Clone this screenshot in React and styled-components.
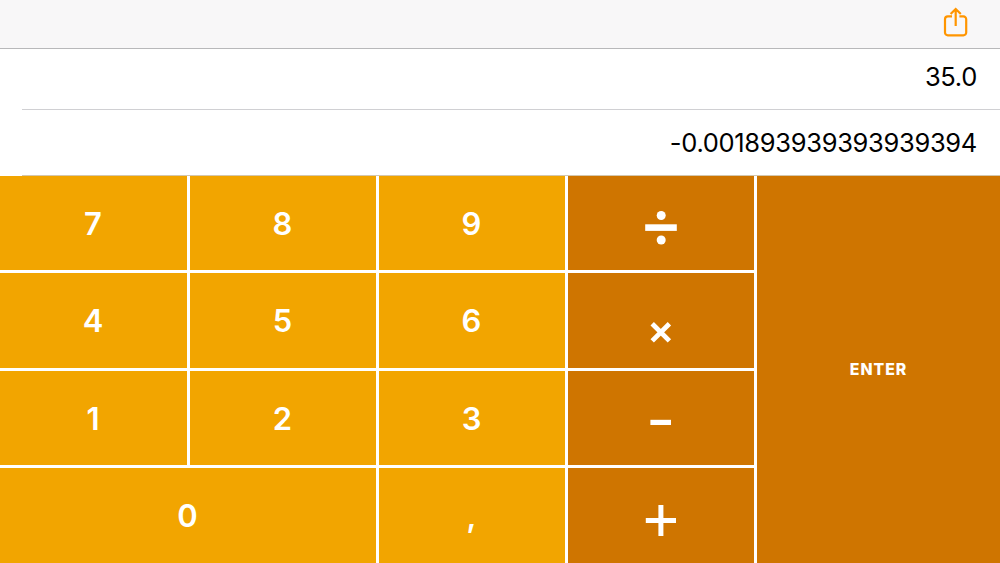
import React from "react";
import styled, { createGlobalStyle } from "styled-components";

const GlobalStyle = createGlobalStyle`
  * {
    box-sizing: border-box;
  }

  body {
    margin: 0;
    background: #fff;
    font-family: Inter, "Liberation Sans", sans-serif;
  }
`;

const Calculator = styled.div`
  display: flex;
  flex-direction: column;
  height: 100vh;
  overflow: hidden;
`;

const Toolbar = styled.header`
  display: flex;
  justify-content: flex-end;
  flex: none;
  height: 49px;
  padding: 7px 31px 0 0;
  background: #f8f7f8;
  border-bottom: 1px solid #b8b8ba;
`;

const ShareButton = styled.button`
  width: 26px;
  height: 32px;
  padding: 0;
  border: 0;
  background: none;
  color: #ff9500;

  svg {
    display: block;
  }
`;

const Stack = styled.div`
  flex: none;
  padding-left: 22px;
`;

const StackRow = styled.div`
  display: flex;
  justify-content: flex-end;
  align-items: center;
  height: ${(props) => props.$height}px;
  padding: 0 23px ${(props) => props.$bottom}px 0;
  border-bottom: 1px solid ${(props) => props.$line};
  font-size: 25.5px;
  line-height: 32px;
  letter-spacing: -0.32px;
  color: #000;
`;

const Keypad = styled.main`
  display: grid;
  grid-template-columns: 187px repeat(3, 186px) 1fr;
  grid-template-rows: 94px 95px 94px 95px;
  gap: 3px;
  flex: 1;
  min-height: 0;
`;

const Key = styled.button`
  display: flex;
  align-items: center;
  justify-content: center;
  grid-column: span ${(props) => props.$span || 1};
  min-height: 0;
  padding: 1px 1px 0 0;
  border: 0;
  background: #f2a500;
  color: #fff;
  font-family: inherit;
  font-size: 31px;
  font-weight: 600;
  line-height: 36px;
`;

const OperatorKey = styled(Key)`
  padding: ${(props) => props.$drop}px 1px 0 0;
  background: #cf7500;

  svg {
    display: block;
  }
`;

const EnterKey = styled(Key)`
  grid-column: 5;
  grid-row: 1 / 5;
  padding: 0;
  background: #cf7500;
  font-size: 15.8px;
  font-weight: 800;
  line-height: 20px;
  letter-spacing: 0.95px;
`;

const ShareIcon = () => (
  <svg width="26" height="32" viewBox="0 0 26 32" fill="none" stroke="currentColor" strokeWidth="2.2">
    <path d="M9 9.4H4.8A2.8 2.8 0 0 0 2 12.2V25.6A2.8 2.8 0 0 0 4.8 28.4H20.4A2.8 2.8 0 0 0 23.2 25.6V12.2A2.8 2.8 0 0 0 20.4 9.4H16.4" />
    <path d="M12.7 19V2.4M7.6 7L12.7 2L17.8 7" />
  </svg>
);

const DivideIcon = () => (
  <svg width="34" height="34" viewBox="0 0 34 34" fill="currentColor">
    <circle cx="17.2" cy="4.5" r="4.5" />
    <rect x="1.2" y="13.3" width="31.6" height="6.6" />
    <circle cx="17.2" cy="29" r="4.5" />
  </svg>
);

const TimesIcon = () => (
  <svg width="34" height="34" viewBox="0 0 34 34" stroke="currentColor" strokeWidth="4.8">
    <path d="M8.2 8.7L25.4 25.9M25.4 8.7L8.2 25.9" />
  </svg>
);

const MinusIcon = () => (
  <svg width="34" height="34" viewBox="0 0 34 34" fill="currentColor">
    <rect x="6.4" y="13.8" width="20.6" height="5.2" />
  </svg>
);

const PlusIcon = () => (
  <svg width="34" height="34" viewBox="0 0 34 34" stroke="currentColor" strokeWidth="5">
    <path d="M1.8 16.5H32M16.9 1V32" />
  </svg>
);

const App = () => (
  <>
    <GlobalStyle />
    <Calculator>
      <Toolbar>
        <ShareButton aria-label="Share">
          <ShareIcon />
        </ShareButton>
      </Toolbar>

      <Stack>
        <StackRow $height={61} $bottom={4} $line="#d0d0d3">
          35.0
        </StackRow>
        <StackRow $height={66} $bottom={0} $line="#d3c7ae">
          -0.001893939393939394
        </StackRow>
      </Stack>

      <Keypad>
        <Key>7</Key>
        <Key>8</Key>
        <Key>9</Key>
        <OperatorKey $drop={10} aria-label="Divide">
          <DivideIcon />
        </OperatorKey>
        <EnterKey>ENTER</EnterKey>

        <Key>4</Key>
        <Key>5</Key>
        <Key>6</Key>
        <OperatorKey $drop={23} aria-label="Multiply">
          <TimesIcon />
        </OperatorKey>

        <Key>1</Key>
        <Key>2</Key>
        <Key>3</Key>
        <OperatorKey $drop={9} aria-label="Subtract">
          <MinusIcon />
        </OperatorKey>

        <Key $span={2}>0</Key>
        <Key>,</Key>
        <OperatorKey $drop={10} aria-label="Add">
          <PlusIcon />
        </OperatorKey>
      </Keypad>
    </Calculator>
  </>
);

export default App;
